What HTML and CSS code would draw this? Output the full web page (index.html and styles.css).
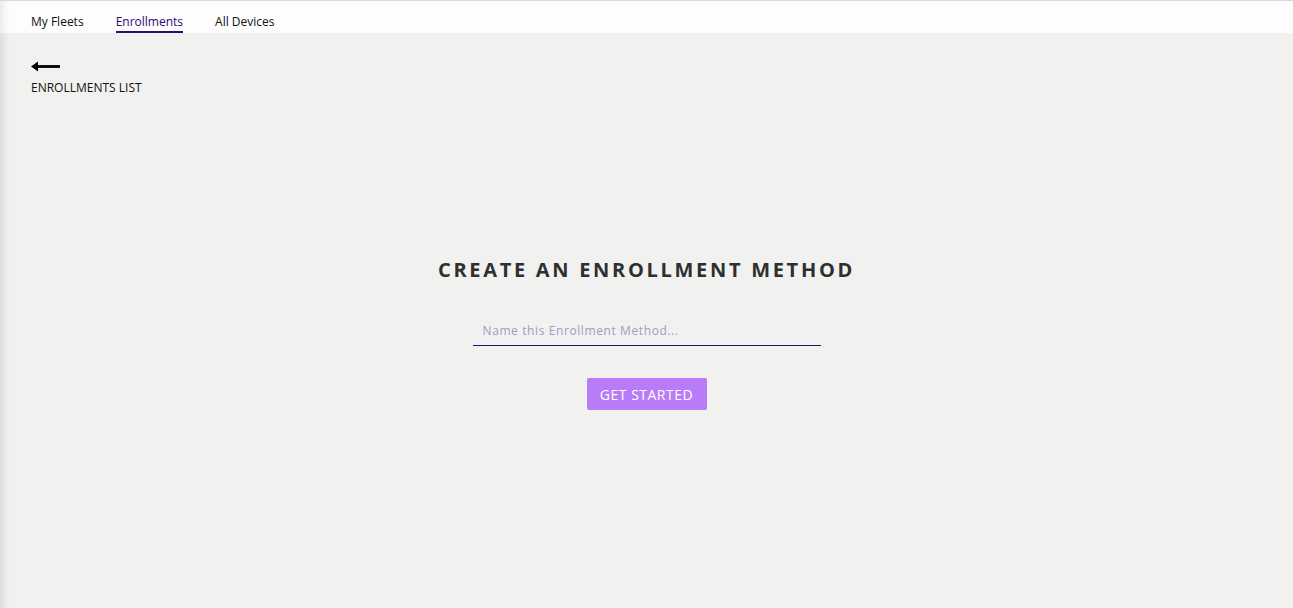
FILE: index.html
```html
<!DOCTYPE html>
<html lang="en">
<head>
<meta charset="utf-8">
<title>Create Enrollment Method</title>
<link rel="stylesheet" href="styles.css">
</head>
<body>
<div class="app">
  <header class="topbar">
    <nav class="tabs">
      <a class="tab">My Fleets</a>
      <a class="tab active">Enrollments</a>
      <a class="tab">All Devices</a>
    </nav>
  </header>
  <main class="content">
    <a class="back">
      <svg class="back-arrow" width="29" height="13" viewBox="0 0 29 13">
        <path d="M0 6.5 L7 1.5 L7 11.5 Z" fill="#000"/>
        <rect x="4" y="5.1" width="25" height="2.8" fill="#000"/>
      </svg>
      <span class="back-label">ENROLLMENTS LIST</span>
    </a>
    <section class="create">
      <h1 class="create-title">CREATE AN ENROLLMENT METHOD</h1>
      <input class="name-input" type="text" placeholder="Name this Enrollment Method...">
      <button class="start-btn">GET STARTED</button>
    </section>
  </main>
</div>
</body>
</html>
```

FILE: styles.css
```css
* { box-sizing: border-box; }
html, body {
  margin: 0;
  padding: 0;
  height: 100%;
}
body {
  font-family: "Open Sans", "Noto Sans", sans-serif;
  background: #f1f2f0;
  color: #000;
}
.app {
  height: 608px;
  display: flex;
  flex-direction: column;
  box-shadow: inset 10px 0 10px -8px rgba(0,0,0,0.12);
}
.topbar {
  height: 33px;
  background: #fcfdfc;
  border-top: 1px solid #d8d9d8;
  display: flex;
  align-items: stretch;
  padding-left: 31px;
  box-shadow: inset 10px 0 10px -8px rgba(0,0,0,0.10);
}
.tabs {
  display: flex;
  gap: 32px;
}
.tab {
  font-size: 12px;
  line-height: 17px;
  color: #111;
  display: flex;
  align-items: flex-end;
  padding-bottom: 1px;
  border-bottom: 2px solid transparent;
  cursor: pointer;
}
.tab.active {
  color: #2f0b73;
  border-bottom-color: #2f0b73;
}
.content {
  flex: 1;
  display: flex;
  flex-direction: column;
  padding: 27px 31px 0;
}
.back {
  display: flex;
  flex-direction: column;
  align-items: flex-start;
  gap: 6px;
  cursor: pointer;
}
.back-arrow { display: block; }
.back-label {
  font-size: 12px;
  color: #111;
  letter-spacing: 0;
}
.create {
  display: flex;
  flex-direction: column;
  align-items: center;
  margin-top: 160px;
}
.create-title {
  margin: 0;
  font-size: 20px;
  font-weight: 700;
  letter-spacing: 2.7px;
  color: #2f2f2f;
  line-height: 28px;
}
.name-input {
  margin-top: 32px;
  width: 348px;
  height: 30px;
  border: none;
  border-bottom: 1px solid #2f0b73;
  background: transparent;
  font-family: "Open Sans", "Noto Sans", sans-serif;
  font-size: 12px;
  letter-spacing: 0.6px;
  padding: 0 10px;
  outline: none;
  color: #333;
}
.name-input::placeholder {
  color: #a996c6;
}
.start-btn {
  margin-top: 32px;
  width: 120px;
  height: 32px;
  border: none;
  border-radius: 2px;
  background: #b97cf8;
  color: #fff;
  font-family: "Open Sans", "Noto Sans", sans-serif;
  font-size: 14px;
  letter-spacing: 0.5px;
  cursor: pointer;
}
```
